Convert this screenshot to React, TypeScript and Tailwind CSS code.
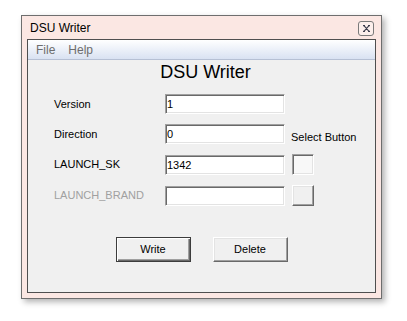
const sunken = "border border-[#a0a0a0] border-b-white border-r-white shadow-[inset_1px_1px_0_#696969,inset_-1px_-1px_0_#e3e3e3]"
const raised = "border border-white border-b-[#696969] border-r-[#696969] shadow-[inset_-1px_-1px_0_#a0a0a0,inset_1px_1px_0_#e3e3e3]"

const Field = ({ label, value, disabled }: { label: string; value: string; disabled?: boolean }) => {
  return (
    <>
      <div className={`text-[11px] leading-[13px] ${disabled ? "text-[#a0a0a0]" : "text-black"}`}>{label}</div>
      <input
        readOnly
        value={value}
        className={`h-[20px] w-[120px] bg-white pl-[1px] text-[11px] text-black outline-none ${sunken}`}
      />
    </>
  )
}

const App = () => {
  return (
    <div className="min-h-screen bg-white pt-[15px] pl-[21px]" style={{ fontFamily: '"Liberation Sans", Arial, sans-serif' }}>
      <div className="flex h-[284px] w-[361px] flex-col border border-[#6e6e6e] bg-[#fbe7e3] shadow-[3px_3px_6px_rgba(0,0,0,0.3)]">
        {/* title bar */}
        <div className="flex h-[23px] items-center justify-between pl-[8px] pr-[7px]">
          <span className="text-[12px] text-black">DSU Writer</span>
          <div className="mt-[2px] flex h-[15px] w-[16px] items-center justify-center rounded-[3px] border border-[#7a7a7a] bg-[#fcefec]">
            <svg width="7" height="7" viewBox="0 0 7 7" fill="none" stroke="#3c3c4c" strokeWidth="1.1">
              <path d="M0 0.6h2M5 0.6h2M0 6.4h2M5 6.4h2M1.2 0.8l4.6 5.4M5.8 0.8L1.2 6.2" />
            </svg>
          </div>
        </div>

        {/* client area */}
        <div className="mx-[5px] mb-[5px] flex flex-1 flex-col border border-[#4f4f4f] bg-[#f0f0f0]">
          <div className="flex h-[20px] items-center gap-[13px] border-b border-[#b6c0d4] bg-gradient-to-b from-white to-[#d9e2f2] pl-[8px] text-[12px] text-[#6d6d6d]">
            <span>File</span>
            <span>Help</span>
          </div>

          <div className="mt-[2px] pl-[8px] text-center text-[18px] leading-[21px] text-black">DSU Writer</div>

          <div className="mt-[11px] grid grid-cols-[104px_120px_22px] items-center gap-x-[7px] gap-y-[10px] pl-[26px]">
            <Field label="Version" value="1" />
            <div />
            <Field label="Direction" value="0" />
            <div className="-ml-[1px] self-end whitespace-nowrap text-[11px] leading-[13px] text-black">Select Button</div>
            <Field label="LAUNCH_SK" value="1342" />
            <div className={`h-[21px] w-[22px] bg-[#f8f8f8] ${sunken}`} />
            <Field label="LAUNCH_BRAND" value="" disabled />
            <div className={`h-[21px] w-[22px] bg-[#f0f0f0] ${raised}`} />
          </div>

          <div className="mt-[31px] flex justify-center gap-[22px]">
            <button className="h-[25px] w-[75px] border border-[#3c3c3c] bg-[#f0f0f0] text-[11px] text-black shadow-[inset_1px_1px_0_#fff,inset_-1px_-1px_0_#696969,inset_-2px_-2px_0_#a0a0a0]">
              Write
            </button>
            <button className={`h-[25px] w-[75px] bg-[#f0f0f0] text-[11px] text-black ${raised}`}>Delete</button>
          </div>
        </div>
      </div>
    </div>
  )
}

export default App
